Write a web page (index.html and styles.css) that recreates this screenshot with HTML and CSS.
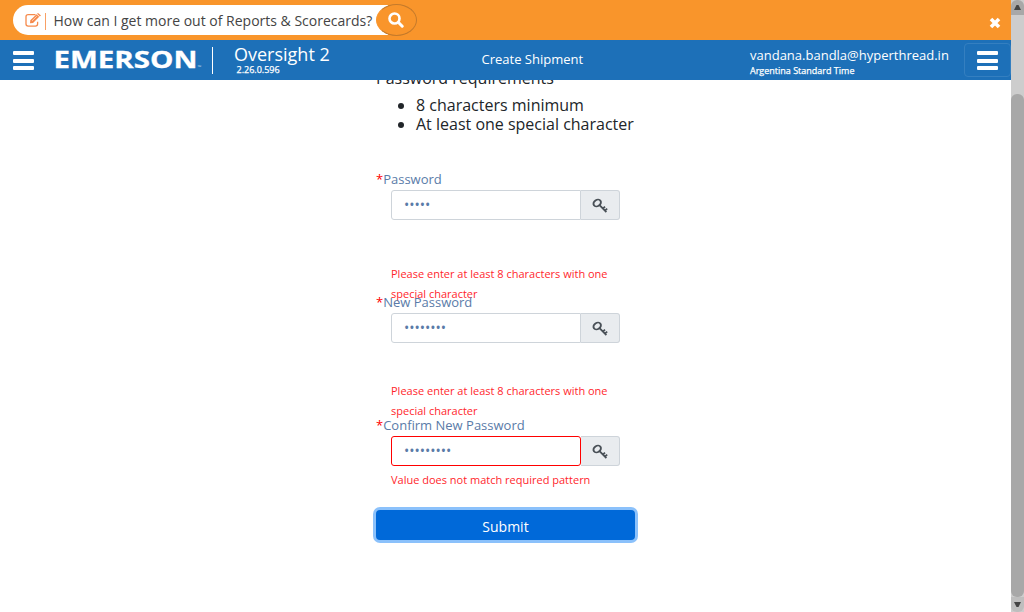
FILE: index.html
```
<!DOCTYPE html>
<html lang="en">
<head>
<meta charset="utf-8">
<title>Oversight 2</title>
<link rel="stylesheet" href="styles.css">
</head>
<body>
<svg class="defs" width="0" height="0" aria-hidden="true">
  <symbol id="key" viewBox="0 0 16 16">
    <ellipse cx="5.2" cy="5" rx="4" ry="3.1" transform="rotate(-35 5.2 5)" fill="none" stroke="#495057" stroke-width="1.9"/>
    <path d="M7.5 7.2L14.4 14M10.8 10.6L13 8.6M12.8 12.6L15.2 10.6" fill="none" stroke="#495057" stroke-width="1.8"/>
  </symbol>
</svg>
<div class="app">
  <header class="help">
    <div class="search">
      <svg class="edit" width="17" height="15" viewBox="0 0 17 15" fill="none" stroke="#f68a4c">
        <path d="M10.5 1.7H3.2Q1 1.7 1 3.8V11Q1 13.1 3.2 13.1H10.4Q12.6 13.1 12.6 11V8.8" stroke-width="1.3"/>
        <path d="M5 10.3L5.3 7.2L11.5 1.2L14.2 3.8L8.1 9.9Z" fill="#f68a4c" stroke="none"/>
        <path d="M12.1 .7L13 0L16 2.6L14.8 3.6Z" fill="#f68a4c" stroke="none"/>
        <path d="M7 7.8L11.8 3.2" stroke="#fff" stroke-width=".6"/>
      </svg>
      <span class="bar"></span>
      <span class="query">How can I get more out of Reports &amp; Scorecards?</span>
    </div>
    <button class="find" aria-label="Search">
      <svg width="16" height="16" viewBox="0 0 16 16" fill="none" stroke="#fff"><circle cx="6.5" cy="6.5" r="5" stroke-width="2.6"/><path d="M10.3 10.3L14.2 14.2" stroke-width="3" stroke-linecap="round"/></svg>
    </button>
    <svg class="close" width="12" height="12" viewBox="0 0 12 12"><path d="M2 2L10 10M10 2L2 10" stroke="#fff" stroke-width="3.6"/></svg>
  </header>
  <nav class="nav">
    <div class="burger"><i></i><i></i><i></i></div>
    <svg class="logo" width="150" height="32" viewBox="0 0 150 32">
      <text class="brand" x="-.5" y="24" textLength="144" lengthAdjust="spacingAndGlyphs">EMERSON</text>
      <text class="tm" x="143.5" y="25">™</text>
    </svg>
    <span class="divider"></span>
    <div class="product"><div class="name">Oversight 2</div><div class="version">2.26.0.596</div></div>
    <div class="page">Create Shipment</div>
    <div class="user"><div class="mail">vandana.bandla@hyperthread.in</div><div class="zone">Argentina Standard Time</div></div>
    <div class="toggle"><div class="burger"><i></i><i></i><i></i></div></div>
  </nav>
  <main class="content">
    <div class="form">
      <div class="title">Password requirements</div>
      <ul class="rules"><li>8 characters minimum</li><li>At least one special character</li></ul>
      <section class="field">
        <label><b>*</b>Password</label>
        <div class="group"><div class="input">•••••</div><div class="addon"><svg width="16" height="16"><use href="#key"/></svg></div></div>
        <p class="error low">Please enter at least 8 characters with one special character</p>
      </section>
      <section class="field">
        <label><b>*</b>New Password</label>
        <div class="group"><div class="input">••••••••</div><div class="addon"><svg width="16" height="16"><use href="#key"/></svg></div></div>
        <p class="error mid">Please enter at least 8 characters with one special character</p>
      </section>
      <section class="field last">
        <label><b>*</b>Confirm New Password</label>
        <div class="group"><div class="input invalid">•••••••••</div><div class="addon"><svg width="16" height="16"><use href="#key"/></svg></div></div>
        <p class="error near">Value does not match required pattern</p>
      </section>
      <button class="submit">Submit</button>
    </div>
  </main>
</div>
<aside class="scroll">
  <div class="cap top"><svg width="7" height="5"><path d="M0 5L2.5 0H4.5L7 5Z" fill="#444"/></svg></div>
  <div class="track"></div>
  <div class="thumb"></div>
  <div class="cap bottom"><svg width="7" height="5"><path d="M0 0L2.5 5H4.5L7 0Z" fill="#444"/></svg></div>
</aside>
</body>
</html>
```
FILE: styles.css
```
* { box-sizing: border-box; }
body { margin: 0; width: 1024px; height: 612px; display: flex; overflow: hidden; background: #fff; font-family: "Open Sans", sans-serif; color: #212529; }
button { font-family: inherit; padding: 0; border: 0; }
svg { display: block; flex: none; }
.defs { position: absolute; }
.app { width: 1011px; height: 612px; display: flex; flex-direction: column; overflow: hidden; }

.help { flex: none; height: 40px; background: #f9952b; display: flex; align-items: center; padding: 0 10px 0 13px; }
.search { width: 375px; height: 30px; background: #fff; border-radius: 15px 0 0 15px; display: flex; align-items: center; padding-left: 12px; white-space: nowrap; }
.bar { width: 1px; height: 17px; background: #f9a065; margin: 2px 8px 0 3px; }
.query { font-size: 14px; line-height: 20px; color: #444; padding-top: 2px; margin-left: -.5px; }
.find { width: 41px; height: 32px; margin-left: -12px; border: 1px solid #c47a2b; border-left-color: #f9952b; border-radius: 50%; background: #f9952b; display: flex; align-items: center; justify-content: center; padding-right: 2px; }
.close { margin: 5px 0 0 auto; }

.nav { flex: none; height: 40px; background: #1d70b8; color: #fff; display: flex; align-items: center; padding-left: 13px; white-space: nowrap; }
.burger { width: 21px; display: flex; flex-direction: column; gap: 3.5px; margin-top: 1px; }
.burger i { height: 4px; background: #fff; border-radius: 1px; }
.logo { margin: 0 0 0 20px; }
.brand { font: 700 23.5px "Open Sans", sans-serif; fill: #fff; stroke: #fff; stroke-width: .3px; }
.tm { font: 5px "Open Sans", sans-serif; fill: #bcd5ec; }
.divider { width: 1px; height: 27px; background: #fff; margin-left: 8px; }
.product { width: 248px; padding-left: 21px; height: 40px; }
.name { font-size: 18px; line-height: 24px; padding-top: 2px; }
.version { font-size: 9px; line-height: 12px; margin: -2px 0 0 2.5px; -webkit-text-stroke: .25px #fff; }
.page { width: 289px; font-size: 13px; line-height: 20px; padding-left: 20.5px; margin-top: -2px; }
.user { width: 214px; height: 40px; }
.mail { font-size: 13px; line-height: 18px; padding-top: 6px; }
.zone { font-size: 9px; line-height: 12px; margin-top: 1px; -webkit-text-stroke: .25px #fff; }
.toggle { width: 47px; height: 34px; border: 1px solid #347fc0; border-radius: 4px; display: flex; align-items: center; justify-content: center; }

.content { flex: 1; overflow: hidden; }
.form { width: 259px; margin: -14px 0 0 376px; }
.title { font-size: 16px; line-height: 24px; }
.rules { margin: 6px 0 35px; padding-left: 40px; font-size: 16px; line-height: 19px; white-space: nowrap; }
.field { height: 123px; font-size: 13px; }
.field label { display: block; line-height: 20px; color: #5a7ba8; }
.field label b { font-weight: 400; color: #f00; }
.group { display: flex; width: 229px; height: 30px; margin: 1px 0 0 15px; }
.input { width: 190px; border: 1px solid #ced4da; border-radius: 3px 0 0 3px; color: #5a7ba8; padding-left: 12px; line-height: 28px; font-size: 14px; }
.input.invalid { border-color: #f00; border-radius: 3px; }
.addon { width: 39px; border: 1px solid #ced4da; border-left: 0; border-radius: 0 3px 3px 0; background: #e9ecef; display: flex; align-items: center; justify-content: center; padding-top: 2px; }
.error { width: 232px; margin: 0 0 0 15px; font-size: 11px; line-height: 20px; color: #ff1f2d; }
.low { margin-top: 44px; }
.mid { margin-top: 38px; }
.near { margin-top: 4px; }
.last { height: 95px; }
.submit { display: block; width: 259px; height: 30px; background: #0069d9; color: #fff; font-size: 14px; padding-top: 2px; border-radius: 4px; box-shadow: 0 0 0 3px #8bc1fb; }

.scroll { width: 13px; height: 612px; background: #cdcdcd; display: flex; flex-direction: column; }
.cap { height: 15px; background: #a8a8a8; display: flex; align-items: center; justify-content: center; flex: none; }
.top { border-radius: 6px 6px 0 0; }
.bottom { background: #bebebe; border-radius: 0 0 6px 6px; }
.track { height: 79px; }
.thumb { flex: 1; background: #a8a8a8; border-radius: 6px; }
```
